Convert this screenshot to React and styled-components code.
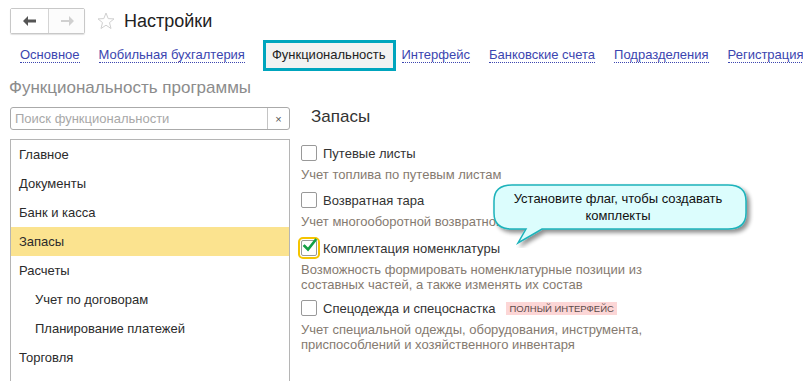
import React from 'react'
import styled, { createGlobalStyle } from 'styled-components'

const colors = {
  text: '#333',
  muted: '#8c8c8c',
  hint: '#857a70',
  link: '#3b45b0',
  accent: '#00a5bd',
  border: '#b5b5b5',
  selected: '#fbe38f',
}

const GlobalStyle = createGlobalStyle`
  html, body {
    margin: 0;
    padding: 0;
    background: #fff;
    overflow: hidden;
  }
  body {
    font-family: "Liberation Sans", Arial, sans-serif;
    font-size: 13px;
    color: ${colors.text};
  }
`

const Page = styled.div`
  width: 803px;
  height: 381px;
  position: relative;
  overflow: hidden;
`

const Header = styled.div`
  display: flex;
  align-items: center;
  padding: 9px 0 0 10px;
  height: 24px;
`

const NavGroup = styled.div`
  display: flex;
  height: 24px;
  border: 1px solid #c8c8c8;
  border-radius: 2px;
  box-shadow: 0 1px 1px rgba(0, 0, 0, 0.12);
`

const NavButton = styled.div`
  width: ${p => p.$w}px;
  display: flex;
  align-items: center;
  justify-content: center;
  background: ${p => (p.$active ? '#fff' : '#fcfcfc')};
  border-right: ${p => (p.$first ? '1px solid #d4d4d4' : 'none')};
`

const Star = styled.div`
  margin-left: 12px;
  width: 18px;
  height: 18px;
  display: flex;
`

const Title = styled.h1`
  margin: 0 0 0 9px;
  font-size: 18px;
  font-weight: normal;
  color: #222;
`

const Tabs = styled.div`
  display: flex;
  align-items: center;
  margin-top: 8px;
  padding-left: 20px;
  height: 29px;
  white-space: nowrap;
`

const Tab = styled.span`
  color: ${colors.link};
  border-bottom: 1px dotted ${colors.link};
  line-height: 14px;
  margin-right: 19px;
  flex-shrink: 0;
`

const ActiveTab = styled.span`
  border: 3px solid ${colors.accent};
  background: #f2f2f2;
  color: #222;
  padding: 4px 7px 5px 6px;
  margin: 0 6px 0 -1px;
  line-height: 16px;
  flex-shrink: 0;
`

const SectionTitle = styled.div`
  font-size: 17px;
  color: ${colors.muted};
  padding: 8px 0 0 9px;
  height: 22px;
`

const Body = styled.div`
  display: grid;
  grid-template-columns: 280px 1fr;
  column-gap: 11px;
  padding: 7px 0 0 10px;
`

const Sidebar = styled.div`
  display: flex;
  flex-direction: column;
  gap: 9px;
`

const Search = styled.div`
  display: flex;
  height: 21px;
  border: 1px solid #aaa;
  border-radius: 3px;
  background: #fff;
`

const SearchInput = styled.div`
  flex: 1;
  padding-left: 4px;
  line-height: 21px;
  color: #a8a8a8;
  border-right: 1px solid #c4c4c4;
`

const SearchClear = styled.div`
  width: 21px;
  display: flex;
  align-items: center;
  justify-content: center;
  font-size: 11px;
  color: #555;
`

const List = styled.div`
  border: 1px solid ${colors.border};
  border-bottom: none;
  height: 260px;
`

const ListItem = styled.div`
  height: 29px;
  line-height: 29px;
  padding-left: ${p => (p.$sub ? 24 : 8)}px;
  background: ${p => (p.$selected ? colors.selected : 'transparent')};
  color: #2b2b2b;
`

const Content = styled.div`
  display: flex;
  flex-direction: column;
`

const ContentTitle = styled.div`
  font-size: 17px;
  color: #333;
  padding-left: 10px;
  height: 37px;
  line-height: 20px;
`

const Option = styled.div`
  display: flex;
  flex-direction: column;
  margin-top: ${p => p.$gap}px;
`

const OptionRow = styled.div`
  display: flex;
  align-items: center;
  height: 18px;
`

const Box = styled.div`
  width: 14px;
  height: 14px;
  border: 1px solid #999;
  border-radius: 2px;
  background: #fff;
  position: relative;
  outline: ${p => (p.$focused ? '2px solid #f5c400' : 'none')};
  outline-offset: 1px;
`

const OptionLabel = styled.span`
  margin-left: 6px;
  color: #333;
`

const Badge = styled.span`
  margin-left: 11px;
  background: #fcd6d6;
  color: #5a4a4a;
  font-size: 9.5px;
  padding: 1px 3px;
  line-height: 11px;
`

const Hint = styled.div`
  color: ${colors.hint};
  margin-top: 5px;
  line-height: 15px;
`

const Callout = styled.div`
  position: absolute;
  left: 492px;
  top: 182px;
  width: 262px;
  height: 66px;
`

const CalloutText = styled.div`
  position: absolute;
  left: 0;
  top: 8px;
  width: 252px;
  text-align: center;
  color: #111;
  line-height: 17px;
`

function Check() {
  return (
    <svg width="16" height="15" viewBox="0 0 16 15" style={{ position: 'absolute', left: 0, top: -3 }}>
      <path d="M2.5 8 L6 11.5 L13.5 2" fill="none" stroke="#14a045" strokeWidth="2.6" strokeLinecap="square" />
    </svg>
  )
}

const options = [
  { label: 'Путевые листы', hint: ['Учет топлива по путевым листам'], gap: 0 },
  { label: 'Возвратная тара', hint: ['Учет многооборотной возвратной тары'], gap: 9 },
  { label: 'Комплектация номенклатуры', hint: ['Возможность формировать номенклатурные позиции из', 'составных частей, а также изменять их состав'], gap: 10, checked: true },
  { label: 'Спецодежда и спецоснастка', hint: ['Учет специальной одежды, оборудования, инструмента,', 'приспособлений и хозяйственного инвентаря'], gap: 7, badge: 'ПОЛНЫЙ ИНТЕРФЕЙС' },
]

const sections = [
  { name: 'Главное' },
  { name: 'Документы' },
  { name: 'Банк и касса' },
  { name: 'Запасы', selected: true },
  { name: 'Расчеты' },
  { name: 'Учет по договорам', sub: true },
  { name: 'Планирование платежей', sub: true },
  { name: 'Торговля' },
]

export default function App() {
  return (
    <Page>
      <GlobalStyle />
      <Header>
        <NavGroup>
          <NavButton $w={37} $first $active>
            <svg width="14" height="10" viewBox="0 0 14 10">
              <path d="M0 5 L5 0 L5 3.5 L13 3.5 L13 6.5 L5 6.5 L5 10 Z" fill="#555" />
            </svg>
          </NavButton>
          <NavButton $w={35}>
            <svg width="14" height="10" viewBox="0 0 14 10">
              <path d="M14 5 L9 0 L9 4 L1 4 L1 6 L9 6 L9 10 Z" fill="#d0d0d0" />
            </svg>
          </NavButton>
        </NavGroup>
        <Star>
          <svg width="18" height="18" viewBox="0 0 18 18">
            <path d="M9 1 L11.2 6.6 L17 6.9 L12.5 10.6 L14 16.5 L9 13.2 L4 16.5 L5.5 10.6 L1 6.9 L6.8 6.6 Z" fill="none" stroke="#d0d0d0" strokeWidth="1" />
          </svg>
        </Star>
        <Title>Настройки</Title>
      </Header>

      <Tabs>
        <Tab>Основное</Tab>
        <Tab>Мобильная бухгалтерия</Tab>
        <ActiveTab>Функциональность</ActiveTab>
        <Tab>Интерфейс</Tab>
        <Tab>Банковские счета</Tab>
        <Tab>Подразделения</Tab>
        <Tab>Регистрация</Tab>
      </Tabs>

      <SectionTitle>Функциональность программы</SectionTitle>

      <Body>
        <Sidebar>
          <Search>
            <SearchInput>Поиск функциональности</SearchInput>
            <SearchClear>×</SearchClear>
          </Search>
          <List>
            {sections.map(s => (
              <ListItem key={s.name} $sub={s.sub} $selected={s.selected}>{s.name}</ListItem>
            ))}
          </List>
        </Sidebar>

        <Content>
          <ContentTitle>Запасы</ContentTitle>
          {options.map(o => (
            <Option key={o.label} $gap={o.gap}>
              <OptionRow>
                <Box $focused={o.checked}>{o.checked && <Check />}</Box>
                <OptionLabel>{o.label}</OptionLabel>
                {o.badge && <Badge>{o.badge}</Badge>}
              </OptionRow>
              <Hint>
                {o.hint.map(line => <div key={line}>{line}</div>)}
              </Hint>
            </Option>
          ))}
        </Content>
      </Body>

      <Callout>
        <svg width="262" height="66" viewBox="0 0 262 66">
          <defs>
            <filter id="sh" x="-10%" y="-20%" width="130%" height="150%">
              <feGaussianBlur in="SourceAlpha" stdDeviation="2" />
              <feOffset dx="3" dy="3" result="b" />
              <feComponentTransfer><feFuncA type="linear" slope="0.45" /></feComponentTransfer>
              <feMerge><feMergeNode /><feMergeNode in="SourceGraphic" /></feMerge>
            </filter>
          </defs>
          <path
            d="M20 3 H236 Q254 3 254 19 V31 Q254 47 236 47 H50 L26 61 L34 47 H20 Q2 47 2 31 V19 Q2 3 20 3 Z"
            fill="#dcfdfd"
            stroke="#1eb3bb"
            strokeWidth="1.5"
            filter="url(#sh)"
          />
        </svg>
        <CalloutText>
          Установите флаг, чтобы создавать<br />комплекты
        </CalloutText>
      </Callout>
    </Page>
  )
}
